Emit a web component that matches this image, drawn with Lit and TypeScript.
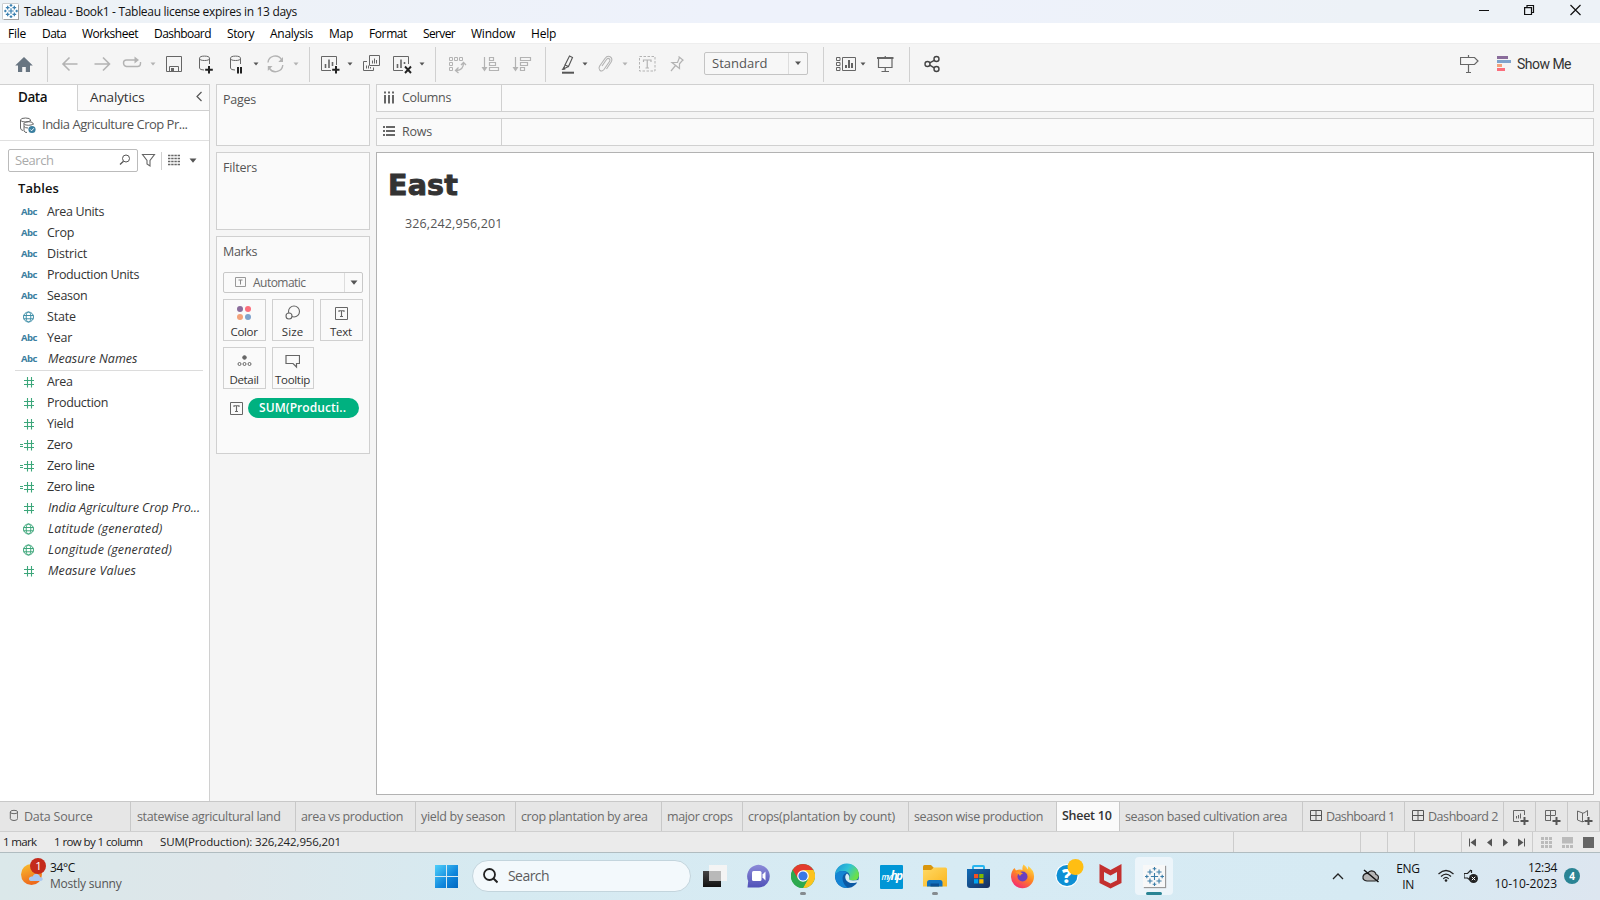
import { LitElement, html, svg, css, nothing } from "lit";
import { customElement, property } from "lit/decorators.js";

/* A label whose tracking is adjusted so that it occupies a given width. */
@customElement("ui-label")
class UiLabel extends LitElement {
  @property() text = "";
  @property({ type: Number }) w = 0;
  static styles = css`
    :host { display: inline-block; white-space: pre; flex: none; }
  `;
  render() {
    return html`<span>${this.text}</span>`;
  }
  updated() {
    const s = this.renderRoot.querySelector("span") as HTMLElement;
    if (!this.w || !s) return;
    s.style.letterSpacing = "0px";
    const n = s.getBoundingClientRect().width;
    s.style.letterSpacing = (this.w - n) / this.text.length + "px";
  }
}

const t = (text: string, w = 0, cls = "") =>
  html`<ui-label class=${cls} .text=${text} .w=${w}></ui-label>`;

const icon = (body: unknown, w = 20, h = 20, cls = "") =>
  html`<svg class=${cls} width=${w} height=${h} viewBox="0 0 ${w} ${h}" fill="none" stroke="currentColor">${body}</svg>`;

const G = {
  home: svg`<path d="M10 3L1.2 11.5H4V18H8.2V13H11.8V18H16V11.5H18.8z" fill="#687581" stroke="none"/>`,
  back: svg`<path d="M17.5 10H3M9.5 3.5L3 10L9.5 16.5" stroke="#b3b3b3" stroke-width="1.6"/>`,
  fwd: svg`<path d="M2.5 10H17M11 3.5L17.500 10L11 16.500" stroke="#b3b3b3" stroke-width="1.6"/>`,
  redo: svg`<path d="M14 6H4.500Q1.500 6 1.500 9T4.500 12.500H15.500Q18.500 12.500 18.500 9.500V8" stroke="#b3b3b3" stroke-width="1.4"/><path d="M12.500 2.500V9.500L17 6z" fill="#b3b3b3" stroke="none"/>`,
  save: svg`<path d="M2.500 2.500H17.500V17.500H2.500zM5.500 17.500V12.500H14.500V17.500" stroke="#666"/><path d="M7 14H10V17.500H7z" fill="#666" stroke="none"/>`,
  dsAdd: svg`<path d="M3.500 4.500V14Q3.500 16 8 16M13.500 4.500V10" stroke="#666"/><ellipse cx="8.500" cy="4.300" rx="5" ry="2.200" stroke="#666"/><path d="M13 12V19.500M9.200 15.800H16.800" stroke="#222" stroke-width="2"/>`,
  dsPause: svg`<path d="M3.500 4.500V14Q3.500 16 8 16M13.500 4.500V10" stroke="#666"/><ellipse cx="8.500" cy="4.300" rx="5" ry="2.200" stroke="#666"/><path d="M11 13V19.500M14 13V19.500" stroke="#222" stroke-width="2"/>`,
  refresh: svg`<path d="M2 8.500A7.300 7.300 0 0 1 15.500 5.500M16.800 11A7.300 7.300 0 0 1 3.500 14.500" stroke="#b3b3b3" stroke-width="1.4"/><path d="M17 3V8H12.300zM1.800 17V12H6.500z" fill="#b3b3b3" stroke="none"/>`,
  sheet: svg`<path d="M16.500 11V2.500H1.500V16.500H11" stroke="#666"/><path d="M5.500 14V10M9 14V5.500M12.500 12V8" stroke="#666" stroke-width="1.600"/><path d="M16 12V19.500M12.200 15.700H19.500" stroke="#222" stroke-width="2"/>`,
  dup: svg`<path d="M8.500 1.500H18.500V11.500H8.500zM6 7.500H2.500V16.500H12.500V13.500" stroke="#666"/><path d="M11.500 9.500V6.500M13.500 9.500V4.500M15.500 9.500V6M5.500 14.500V11.500M7.500 14.500V11.500M9.500 14.500V13" stroke="#666"/>`,
  clear: svg`<path d="M16.500 10V2.500H1.500V16.500H11" stroke="#666"/><path d="M5.500 14V10M9 14V5.500M12.500 10V8" stroke="#666" stroke-width="1.600"/><path d="M13 12.500L19 19M19 12.500L13 19" stroke="#222" stroke-width="1.900"/>`,
  swap: svg`<path d="M2.500 3.500h3v3h-3zM7.500 3.500h3v3h-3zM12.500 3.500h3v3h-3zM2.500 8.500h3v3h-3zM2.500 13.500h3v3h-3z" stroke="#b3b3b3"/><path d="M16.500 9Q16.500 16 9.500 16.500M14 11L16.500 8.500L19 11M11.500 13.500L8.500 16.500L11.500 19" stroke="#b3b3b3" stroke-width="1.300"/>`,
  asc: svg`<path d="M4.500 3V15M9.500 3.500h4v3h-4zM9.500 8.500h6v3h-6zM9.500 13.500h9v3h-9z" stroke="#b3b3b3" stroke-width="1.200"/><path d="M1.500 13H7.500L4.500 17.500z" fill="#b3b3b3" stroke="none"/>`,
  desc: svg`<path d="M3.500 3V15M8.500 3.500h10v3h-10zM8.500 8.500h7v3h-7zM8.500 13.500h4v3h-4z" stroke="#b3b3b3" stroke-width="1.200"/><path d="M.5 13H6.500L3.500 17.500z" fill="#b3b3b3" stroke="none"/>`,
  pen: svg`<path d="M11.500 2L14.500 3.500L10.500 12.500L7 11zM7 11L5.500 15L10.500 12.500" stroke="#555" stroke-width="1.100"/><path d="M3.500 16L6 12.500L7.500 15.500z" fill="#555" stroke="none"/><path d="M4 18.700H16" stroke="#555" stroke-width="2"/>`,
  clip: svg`<path d="M7 12L11.500 5.500Q13 3.500 14.500 5Q15.500 6 14.500 7.500L9 15.500Q7 18 4.800 16.200Q3.200 14.500 4.500 12.300L10 4.500Q12.500 1 15.500 3Q18 5 16 8.300L11.500 15" stroke="#b3b3b3" stroke-width="1.100"/>`,
  tbox: svg`<rect x="2.500" y="2.500" width="15.500" height="14.500" stroke="#b3b3b3" stroke-dasharray="2.500 1.500"/><path d="M6.500 8V6H14V8M10.250 6V14M8.500 14H12" stroke="#b3b3b3" stroke-width="1.200"/>`,
  pin: svg`<path d="M11.500 2.500L16.500 6.500M12.500 3.500L10.500 8.500L5 8.500L12.500 14.500L12.500 9.800L15.800 6M8.500 11.500L4 17" stroke="#b3b3b3" stroke-width="1.200"/>`,
  cards: svg`<path d="M.5 3.500h3.500v3h-3.500zM.5 8.500h3.500v3h-3.500zM.5 13.500h3.500v3h-3.500zM6.500 3.500H19.500V16.500H6.500z" stroke="#666"/><path d="M10 14V11M13 14V6M16 14V9" stroke="#555" stroke-width="1.800"/>`,
  present: svg`<path d="M3.500 4V13.500H17V4M10.250 2V4M10.250 13.500V17M6.500 17.500H14" stroke="#666" stroke-width="1.200"/><path d="M2 4H18.500" stroke="#666" stroke-width="2"/>`,
  share: svg`<g stroke="#444" stroke-width="1.400"><circle cx="5.500" cy="10" r="2.500"/><circle cx="14.500" cy="5" r="2.500"/><circle cx="14.500" cy="15" r="2.500"/><path d="M7.700 8.800L12.300 6.300M7.700 11.200L12.300 13.800"/></g>`,
  sign: svg`<path d="M.5 3.500H14.500L18 7L14.500 10.500H.5zM8.500 1V3.500M8.500 10.500V18M6 18.500H11" stroke="#666" stroke-width="1.200"/>`,
};

type Tool = [keyof typeof G | "|" | "v" | "V" | "select", number];
const TOOLS: Tool[] = [
  ["home", 14], ["|", 13], ["back", 12], ["fwd", 12], ["redo", 10], ["v", 7], ["save", 7], ["dsAdd", 12],
  ["dsPause", 11], ["V", 5], ["refresh", 6], ["v", 6], ["|", 9], ["sheet", 10], ["V", 6], ["dup", 7],
  ["clear", 11], ["V", 6], ["|", 9], ["swap", 11], ["asc", 13], ["desc", 12], ["|", 13], ["pen", 12],
  ["V", 3], ["clip", 6], ["v", 6], ["tbox", 8], ["pin", 10], ["select", 17], ["|", 15], ["cards", 12],
  ["V", 3], ["present", 8], ["|", 14], ["share", 12],
];

const FIELDS: [string, string, number, boolean?][] = [
  ["abc", "Area Units", 57], ["abc", "Crop", 27], ["abc", "District", 40], ["abc", "Production Units", 92],
  ["abc", "Season", 40.5], ["globe", "State", 29], ["abc", "Year", 25], ["abc", "Measure Names", 89.5, true],
];
const MEASURES: [string, string, number, boolean?][] = [
  ["num", "Area", 25.5], ["num", "Production", 61], ["num", "Yield", 26.5], ["calc", "Zero", 25.5],
  ["calc", "Zero line", 47.5], ["calc", "Zero line", 47.5], ["num", "India Agriculture Crop Pro...", 152, true],
  ["globe", "Latitude (generated)", 114.500, true], ["globe", "Longitude (generated)", 124, true],
  ["num", "Measure Values", 88, true],
];

const SHEETS: [string, number, number, string?][] = [
  ["statewise agricultural land", 165, 143.500, "first"], ["area vs production", 120, 102], ["yield by season", 100, 84],
  ["crop plantation by area", 146, 126.500], ["major crops", 81, 65.500], ["crops(plantation by count)", 166, 147],
  ["season wise production", 148, 129], ["Sheet 10", 63, 49.500, "active"], ["season based cultivation area", 183, 162],
  ["Dashboard 1", 102, 68.500, "dash"], ["Dashboard 2", 99, 70, "dash"],
];

const tIcon = (c: string) => icon(svg`<path d="M.5 .5H12.500V12.500H.5z" stroke=${c}/><path d="M4 5V3.700H9V5M6.500 3.700V9.500M5 9.500H8" stroke=${c} stroke-width="1.100"/>`, 13, 13);

const plusMark = (c: string, w: number, s: number) => {
  const pts = [[10.500, 10.500, 4], [10.500, 2, 2], [10.500, 19, 2], [2, 10.500, 2], [19, 10.500, 2], [5.500, 5.500, 2.800], [15.500, 5.500, 2.800], [5.500, 15.500, 2.800], [15.500, 15.500, 2.800]];
  return html`<svg width=${w} height=${w} viewBox="0 0 21 21" stroke=${c} stroke-width=${s}>
    ${pts.map(([x, y, r]) => svg`<path d="M${x - r} ${y}H${x + r}M${x} ${y - r}V${y + r}"/>`)}
  </svg>`;
};

@customElement("app-root")
class AppRoot extends LitElement {
  static styles = css`
    :host { display: block; width: 1600px; height: 900px; overflow: hidden; font: 12.500px/20px "Open Sans", sans-serif; color: #333; background: #f5f5f5; }
    * { box-sizing: border-box; }
    svg { display: block; flex: none; }
    .page { display: flex; flex-direction: column; height: 900px; }
    .title { height: 23px; flex: none; display: flex; align-items: center; background: linear-gradient(90deg, #edf2f6, #eef2fb 45%, #eef2fb 60%, #edf2f7 85%); color: #111; font-size: 12px; padding-left: 3px; }
    .logo { width: 15px; height: 15px; background: #fff; box-shadow: 0 0 0 .5px #aaa, 1px 1px 0 #999; margin: -1px 6px 0 0; display: flex; align-items: center; justify-content: center; }
    .wins { margin-left: auto; display: flex; color: #111; padding-right: 19px; gap: 35px; margin-top: -3px; }
    .menu { height: 20px; flex: none; background: #fff; display: flex; gap: 16px; padding-left: 8px; font-size: 12px; line-height: 22px; color: #000; }
    .tools { height: 41px; flex: none; background: #f5f5f5; border-top: 1px solid #eee; display: flex; align-items: flex-start; }
    .tool { flex: none; margin-top: 10px; }
    .sep { width: 1px; height: 35px; background: #d0d0d0; flex: none; margin-top: 3px; }
    .caret { width: 8px; height: 20px; flex: none; margin-top: 10px; display: flex; align-items: center; justify-content: center; }
    .select { width: 104px; height: 23px; margin-top: 8px; border: 1px solid #c4c4c4; border-radius: 2px; display: flex; background: #f7f7f7; color: #555; line-height: 21px; padding-left: 7px; flex: none; font-size: 13px; }
    .drop { margin-left: auto; width: 19px; border-left: 1px solid #ddd; display: flex; align-items: center; justify-content: center; }
    .auto .drop { width: 18px; }
    .right { margin-left: auto; display: flex; align-items: flex-start; color: #333; font-family: Roboto, sans-serif; font-size: 14px; padding-right: 29px; }
    .right ui-label { margin-top: 9.500px; margin-left: 6px; }
    .right svg { margin-top: 11px; }
    .right svg.sg { margin-top: 10px; }
    .body { height: 717px; flex: none; display: grid; grid-template-columns: 210px 154px 1218px; column-gap: 6px; }
    .side { background: #fff; border-right: 1px solid #d0d0d0; border-top: 1px solid #d0d0d0; }
    .tabs { display: flex; height: 26px; font-size: 13.500px; line-height: 24px; }
    .tab1 { width: 77px; padding-left: 18px; color: #111; font-weight: 600; }
    .tab2 { flex: 1; display: flex; background: #fafafa; border-left: 1px solid #d0d0d0; border-bottom: 1px solid #d0d0d0; padding-left: 12px; color: #333; }
    .tab2 svg { margin: 5px 3px 0 auto; }
    .ds { height: 30px; border-bottom: 1px solid #e0e0e0; display: flex; padding-left: 19px; color: #555; font-size: 13px; line-height: 27px; }
    .ds svg { margin: 6px 5px 0 0; }
    .find { display: flex; margin: 8px 0 0 8px; height: 23px; align-items: center; color: #666; }
    .find > svg { margin-top: -1px; }
    .find .sep { height: 18px; margin: 0; }
    .box { width: 130px; height: 23px; border: 1px solid #bbb; border-radius: 2px; display: flex; align-items: center; padding: 0 6px 1px 6px; justify-content: space-between; color: #aaa; font-size: 13px; }
    .head { font-weight: 600; font-size: 13px; color: #111; height: 29px; line-height: 33px; padding-left: 18px; }
    .field { height: 21px; display: flex; align-items: center; color: #333; font-size: 12.500px; line-height: 21px; }
    .ic { width: 47px; padding-left: 20px; display: flex; flex: none; }
    .ital { font-style: italic; }
    .ital > ui-label { margin-left: 1px; }
    .abc { color: #3c7e9f; font-weight: 700; font-size: 9.500px; line-height: 20px; padding: 1px 0 0 21px; font-style: normal; }
    .teal { color: #3f8fa8; } .green { color: #3ca67a; }
    .rule { height: 1px; background: #dcdcdc; margin: 1px 6px 0 15px; }
    .mid { display: flex; flex-direction: column; gap: 6px; }
    .card { border: 1px solid #d0d0d0; background: #fafafa; padding: 5px 6px; color: #555; font-size: 12.500px; }
    .pages { height: 62px; } .filters { height: 78px; } .marks { height: 218px; }
    .auto { height: 21px; border: 1px solid #c8c8c8; border-radius: 2px; margin-top: 10px; display: flex; padding-left: 11px; line-height: 20px; font-size: 12px; color: #666; }
    .auto svg { margin-top: 3px; margin-right: 6px; }
    .auto .drop svg { margin: 0; }
    .grid { display: grid; grid-template-columns: 43px 42px 43px; grid-auto-rows: 42px; gap: 6px; justify-content: space-between; margin-top: 6px; }
    .btn { border: 1px solid #d0d0d0; display: flex; flex-direction: column; align-items: center; color: #333; font-size: 11.500px; line-height: 16px; padding-right: 1px; }
    .btn .g { height: 25px; display: flex; align-items: center; padding-top: 2px; }
    .pillrow { display: flex; margin: 9px 0 0 7px; gap: 5px; align-items: center; }
    .pill { width: 111px; height: 20px; border-radius: 10px; background: #00b180; color: #fff; font-weight: 600; line-height: 19px; padding-left: 11px; font-size: 12px; }
    .main { display: flex; flex-direction: column; gap: 6px; }
    .shelf { height: 28px; border: 1px solid #d0d0d0; background: #fafafa; display: flex; color: #555; font-size: 12.500px; line-height: 26px; }
    .sl { width: 125px; border-right: 1px solid #d0d0d0; display: flex; padding-left: 6px; }
    .sl svg { margin: 6px 6px 0 0; }
    .view { height: 643px; background: #fff; border: 1px solid #b2b2b2; padding: 15px 11px; }
    .east { font: 700 28.500px/36px "DejaVu Sans", sans-serif; color: #333; display: block; -webkit-text-stroke: .9px #333; }
    .val { display: block; margin: 10px 0 0 17px; color: #555; font-size: 12.500px; }
    .sheets { height: 31px; flex: none; display: flex; background: #e6e6e6; border-top: 1px solid #c8c8c8; border-bottom: 1px solid #cfcfcf; color: #6b6b6b; font-size: 12.500px; line-height: 30px; }
    .sh { border-right: 1px solid #c8c8c8; padding-left: 5px; display: flex; flex: none; }
    .first { padding-left: 6px; }
    .src { width: 131px; padding-left: 9px; }
    .src svg { margin: 7px 6px 0 0; }
    .dash { padding-left: 7px; } .dash svg { margin: 7px 4px 0 0; }
    .active { background: #fafafa; color: #333; font-weight: 600; line-height: 28px; }
    .add { width: 32px; padding-left: 8px; } .add svg { margin-top: 7px; }
    .status { height: 21px; flex: none; display: flex; background: #ebebeb; border-bottom: 1px solid #b0bcc0; color: #222; font-size: 11.500px; line-height: 20px; padding-left: 3px; gap: 17.500px; }
    .cells { margin-left: auto; display: flex; }
    .cell { border-left: 1px solid #ccc; display: flex; align-items: center; flex: none; }
    .nav { width: 71px; padding-left: 4px; } .modes { width: 68px; padding-left: 8px; gap: 9px; }
    .nav svg { margin-top: -1px; }
    .bar { height: 47px; flex: none; display: flex; background: linear-gradient(90deg, #dbe8ea 0, #dde6ea 14%, #d6eaf1 30%, #d7ebf4 60%, #d6eaf3 85%, #dde6f0 100%); color: #111; font-size: 12px; line-height: 16px; }
    .bar > svg { margin-top: 9px; }
    .wx { display: flex; width: 430px; padding-left: 18px; }
    .wx div { padding: 7px 0 0 4px; display: flex; flex-direction: column; }
    .gray { color: #555; }
    .search { width: 219px; height: 32px; margin: 7px 12px 0 13px; border-radius: 16px; background: #f3f9fc; border: 1px solid #c3d5dd; display: flex; align-items: center; padding-left: 10px; gap: 10px; color: #5c5c5c; font-size: 14px; }
    .app { width: 24px; margin: 8px 20px 0 0; flex: none; display: flex; flex-direction: column; align-items: center; }
    .app i { width: 6px; height: 3px; border-radius: 2px; background: #858b8f; margin-top: 3px; }
    .tile { width: 38px; height: 38px; margin: 4px 0 0 -7px; background: #edf5fa; border-radius: 4px; display: flex; flex-direction: column; align-items: center; padding-top: 8px; flex: none; }
    .tile div { width: 22px; height: 22px; background: #f8f8f8; box-shadow: 1px 1px 1px #999; display: flex; align-items: center; justify-content: center; }
    .tile i { width: 16px; height: 3px; border-radius: 2px; background: #2a8494; margin-top: 5px; }
    .bar > svg.help { margin-top: 5px; }
    .hp { width: 23px; height: 24px; margin-top: 4px; background: #0096d6; color: #fff; font: italic 700 9px/22px "Open Sans", sans-serif; border-radius: 1px; display: flex; align-items: baseline; padding-left: 2px; }
    .hp .my { font-size: 8px; font-weight: 600; } .hp .big { font-size: 12px; }
    .tray { margin-left: auto; display: flex; color: #111; }
    .lang { display: flex; flex-direction: column; align-items: center; padding-top: 8px; width: 26px; margin-right: 17px; }
    .clock { display: flex; flex-direction: column; align-items: flex-end; padding-top: 7px; width: 64px; margin-left: 11px; }
    .badge { width: 16px; height: 16px; border-radius: 50%; background: #2a8494; color: #fff; font-weight: 700; font-size: 10px; text-align: center; margin: 15px 20px 0 7px; }
  `;

  caret(c: string, w = 5) {
    return html`<svg width="8" height="5" viewBox="0 0 8 5"><path d="M${4 - w / 2} 0.500H${4 + w / 2}L4 ${0.500 + w * 0.600}z" fill=${c} /></svg>`;
  }

  tool([k, gap]: Tool) {
    const m = `margin-left:${gap}px`;
    if (k === "|") return html`<div class="sep" style=${m}></div>`;
    if (k === "v" || k === "V") return html`<div class="caret" style=${m}>${this.caret(k === "V" ? "#555" : "#b3b3b3")}</div>`;
    if (k === "select") return html`<div class="select" style=${m}>${t("Standard", 55.500)}<div class="drop">${this.caret("#555", 6)}</div></div>`;
    return html`<div class="tool" style=${m}>${icon(G[k])}</div>`;
  }

  fieldIcon(k: string, green: boolean) {
    if (k === "abc") return html`<div class="ic abc">${t("Abc", 16)}</div>`;
    if (k === "globe")
      return html`<div class="ic ${green ? "green" : "teal"}">${icon(svg`<circle cx="8.500" cy="7" r="5"/><ellipse cx="8.500" cy="7" rx="2.300" ry="5"/><path d="M3.500 5.500H13.500M3.500 8.800H13.500"/>`, 16, 14)}</div>`;
    return html`<div class="ic green">${icon(svg`<path d="M4 5.500H14M4 9.500H14M7.500 2V12.500M11.500 2V12.500" stroke-width="1.100"/>${k === "calc" ? svg`<path d="M0 6.500H3M0 8.500H3"/>` : nothing}`, 16, 14)}</div>`;
  }

  field(f: [string, string, number, boolean?], green: boolean) {
    return html`<div class="field ${f[3] ? "ital" : ""}">${this.fieldIcon(f[0], green)}${t(f[1], f[2])}</div>`;
  }

  side() {
    return html`<div class="side">
      <div class="tabs">
        <div class="tab1">${t("Data", 29)}</div>
        <div class="tab2">${t("Analytics", 54.500)}${icon(svg`<path d="M7.500 2L3 6.500L7.500 11" stroke="#555" stroke-width="1.200"/>`, 12, 13)}</div>
      </div>
      <div class="ds">
        ${icon(svg`<g stroke="#666"><ellipse cx="6.500" cy="3" rx="5" ry="2"/><path d="M1.500 3V11Q1.500 13 4 13.500M11.500 3V4"/><ellipse cx="9.500" cy="6.500" rx="4.500" ry="1.800"/><path d="M5 6.500V14Q5.500 15.500 8 15.500M14 6.500V8M5 9.500Q6 11 9 11"/></g><circle cx="13" cy="12.500" r="3.600" fill="#3a7fa0" stroke="none"/><path d="M11.300 12.500L12.600 13.800L14.800 11.300" stroke="#fff"/>`, 18, 18)}
        ${t("India Agriculture Crop Pr...", 145.500)}
      </div>
      <div class="find">
        <div class="box">${t("Search", 38.500)}${icon(svg`<circle cx="7" cy="4.500" r="3.500" stroke="#555"/><path d="M4.500 7.300L1 10.500" stroke="#555" stroke-width="1.300"/>`, 12, 12)}</div>
        ${icon(svg`<path d="M4.500 2.500H16.500L12 8.500V14L9 12V8.500z" stroke="#666" stroke-width="1.100"/>`, 23, 16)}
        <div class="sep"></div>
        ${icon(svg`<path d="M6 2.500H18M6 5.500H18M6 8.500H18M6 11.500H18" stroke="#666" stroke-width="1.300" stroke-dasharray="2.400 .8"/>`, 27, 14)}
        ${this.caret("#555", 7)}
      </div>
      <div class="head">${t("Tables", 41)}</div>
      ${FIELDS.map((f) => this.field(f, false))}
      <div class="rule"></div>
      ${MEASURES.map((f) => this.field(f, true))}
    </div>`;
  }

  btn(g: unknown, label: string, w: number) {
    return html`<div class="btn"><div class="g">${g}</div>${t(label, w)}</div>`;
  }

  cards() {
    return html`<div class="mid">
      <div class="card pages">${t("Pages", 33)}</div>
      <div class="card filters">${t("Filters", 34)}</div>
      <div class="card marks">
        ${t("Marks", 34)}
        <div class="auto">${icon(svg`<path d="M.5 1.500H10.500V10.500H.5z" stroke="#999"/><path d="M3.500 4H7.500M5.500 4V8.500" stroke="#888"/>`, 12, 13)}${t("Automatic", 52.500)}<div class="drop">${this.caret("#555", 7)}</div></div>
        <div class="grid">
          ${this.btn(icon(svg`<g stroke="none"><circle cx="3" cy="4" r="3" fill="#8a6c9b"/><circle cx="11" cy="4" r="3" fill="#fb6e7c"/><circle cx="3" cy="12" r="3" fill="#f3a27a"/><circle cx="11" cy="12" r="3" fill="#7fa3cc"/></g>`, 15, 16), "Color", 27)}
          ${this.btn(icon(svg`<circle cx="9" cy="6.500" r="5.500" stroke="#666" stroke-width="1.100"/><circle cx="4" cy="11" r="3" fill="#fafafa" stroke="#666" stroke-width="1.100"/>`, 16, 16), "Size", 21.500)}
          ${this.btn(tIcon("#666"), "Text", 22)}
          ${this.btn(icon(svg`<g stroke="#666"><circle cx="7.500" cy="3.500" r="1.800" fill="#666"/><circle cx="2.500" cy="10" r="1.500"/><circle cx="7.500" cy="10" r="1.500"/><circle cx="12.500" cy="10" r="1.500"/></g>`, 15, 14), "Detail", 29)}
          ${this.btn(icon(svg`<path d="M1 1.500H14.500V9.500H11.500V13L8 9.500H1z" stroke="#666" stroke-width="1.200"/>`, 15, 15), "Tooltip", 35)}
        </div>
        <div class="pillrow">${tIcon("#666")}<div class="pill">${t("SUM(Producti..", 87)}</div></div>
      </div>
    </div>`;
  }

  main() {
    return html`<div class="main">
      <div class="shelf"><div class="sl">${icon(svg`<path d="M2 .5V2.500M6 .5V2.500M10 .5V2.500M2 4V12.500M6 4V12.500M10 4V12.500" stroke="#666" stroke-width="2"/>`, 13, 13)}${t("Columns", 49)}</div></div>
      <div class="shelf"><div class="sl">${icon(svg`<path d="M0 2H2M0 6H2M0 10H2M3 2H12M3 6H12M3 10H12" stroke="#666" stroke-width="2"/>`, 13, 13)}${t("Rows", 30)}</div></div>
      <div class="view">${t("East", 70, "east")}${t("326,242,956,201", 97.500, "val")}</div>
    </div>`;
  }

  dashIcon() {
    return icon(svg`<path d="M.5 1.500H11.500V11.500H.5zM6 1.500V11.500M.5 6.500H11.500" stroke="#555"/>`, 12, 13);
  }

  sheets() {
    const plus = svg`<path d="M12.500 8V16M8.500 12H16.500" stroke="#555" stroke-width="2"/>`;
    return html`<div class="sheets">
      <div class="sh src">${icon(svg`<ellipse cx="5" cy="3" rx="3.700" ry="1.700" stroke="#666"/><path d="M1.300 3V9.500Q1.500 11.500 5 11.500T8.700 9.500V3" stroke="#666"/>`, 9, 13)}${t("Data Source", 68.500)}</div>
      ${SHEETS.map(([n, w, tw, k]) => html`<div class="sh ${k ?? ""}" style="width:${w}px">${k === "dash" ? this.dashIcon() : nothing}${t(n, tw)}</div>`)}
      <div class="sh add">${icon(svg`<path d="M12.500 6V1.500H1.500V12.500H7" stroke="#666"/><path d="M4.500 9.500V7M6.500 9.500V6M8.500 9.500V4.500" stroke="#666"/>${plus}`, 18, 17)}</div>
      <div class="sh add">${icon(svg`<path d="M11.500 6V1.500H1.500V11.500H7M6.500 1.500V11.500M1.500 6.500H11.500" stroke="#666"/>${plus}`, 18, 17)}</div>
      <div class="sh add">${icon(svg`<path d="M6.500 13V4L1.500 2V11L6.500 13M6.500 4H8L11.500 1.500V7M6.500 12.500H8" stroke="#666"/>${plus}`, 18, 17)}</div>
    </div>`;
  }

  status() {
    const nav = ["M10 6.500V14.500L4.500 10.500z", "M10 6.500V14.500L5 10.500z", "M5 6.500V14.500L10 10.500z", "M4 6.500V14.500L9.500 10.500z"];
    return html`<div class="status">
      ${t("1 mark", 33.500)}${t("1 row by 1 column", 88.500)}${t("SUM(Production): 326,242,956,201", 181)}
      <div class="cells">
        <div class="cell" style="width:127px"></div><div class="cell" style="width:27px"></div><div class="cell" style="width:27px"></div><div class="cell" style="width:47px"></div>
        <div class="cell nav">${nav.map((d, i) => icon(svg`<path d=${d} fill="#555" stroke="none"/>${i === 0 ? svg`<path d="M3.500 6.500V14.500" stroke="#555"/>` : i === 3 ? svg`<path d="M10.500 6.500V14.500" stroke="#555"/>` : nothing}`, 16, 20))}</div>
        <div class="cell modes">
          ${icon(svg`<path d="M0 1.500H11M0 5.500H11M0 9.500H11" stroke="#bbb" stroke-width="3" stroke-dasharray="3 1"/>`, 12, 11)}
          ${icon(svg`<path d="M0 0H11V6.500H0z" fill="#bbb" stroke="none"/><path d="M0 9.500H11" stroke="#bbb" stroke-width="3" stroke-dasharray="3 1"/>`, 12, 11)}
          ${icon(svg`<path d="M0 0H11V11H0z" fill="#666" stroke="none"/>`, 12, 11)}
        </div>
      </div>
    </div>`;
  }

  app(body: unknown, dot = false) {
    return html`<div class="app"><svg width="24" height="28" viewBox="0 0 24 28">${body}</svg>${dot ? html`<i></i>` : nothing}</div>`;
  }

  taskbar() {
    return html`<div class="bar">
      <div class="wx">
        <svg width="28" height="36" viewBox="0 0 28 36">
          <defs><linearGradient id="sun" x2="0.300" y2="1"><stop stop-color="#f9c02e"/><stop offset="1" stop-color="#ee6a1c"/></linearGradient></defs>
          <circle cx="13.500" cy="21.500" r="10.500" fill="url(#sun)"/>
          <path d="M13 28Q10.500 27.500 11 25Q12 23 14.500 23.500Q16 20 19.500 21Q22 22 22 24Q25.500 24.500 24.500 27Q24 28 22 28z" fill="#a9c8f2"/>
          <circle cx="20" cy="13" r="8" fill="#c42b1c"/>
          <text x="17.300" y="17.200" font-family="Open Sans" font-size="11.500" fill="#fff">1</text>
        </svg>
        <div>${t("34°C", 25)}${t("Mostly sunny", 71.500, "gray")}</div>
      </div>
      <svg width="29" height="30" viewBox="0 0 29 30">
        <defs><linearGradient id="win" x2="1" y2="1"><stop stop-color="#4fd0fb"/><stop offset=".6" stop-color="#0f86dc"/><stop offset="1" stop-color="#0067c0"/></linearGradient></defs>
        <path d="M5 3H16V14H5zM17 3H28V14H17zM5 15H16V26H5zM17 15H28V26H17z" fill="url(#win)"/>
      </svg>
      <div class="search">${icon(svg`<circle cx="6.500" cy="6.500" r="5.500" stroke="#222" stroke-width="1.800"/><path d="M10.500 10.500L14.500 14.500" stroke="#222" stroke-width="2"/>`, 15, 16)}${t("Search", 41)}</div>
      ${this.app(svg`<defs><linearGradient id="tv" y2="1" x2="0"><stop stop-color="#444"/><stop offset="1" stop-color="#111"/></linearGradient></defs><path d="M0 10H18V26H0z" fill="url(#tv)"/><path d="M6 4H24V20H6z" fill="#f4f4f4"/><path d="M6 10H18V20H6z" fill="#b9b9b9"/>`)}
      ${this.app(svg`<defs><linearGradient id="ch" x2="0" y2="1"><stop stop-color="#8b8ad8"/><stop offset="1" stop-color="#5051b8"/></linearGradient></defs><path d="M.5 26.500L1.200 20A11.300 11.300 0 1 1 12 26.500z" fill="url(#ch)"/><rect x="5" y="10" width="9.500" height="10" rx="1.500" fill="#fff"/><path d="M15.500 13.500L18.500 10.500V19.500L15.500 16.500z" fill="#fff"/>`)}
      ${this.app(svg`<circle cx="12" cy="15" r="12" fill="#2da94f"/><path d="M12 15L1.600 9A12 12 0 0 1 22.400 9z" fill="#e33b2e"/><path d="M12 27A12 12 0 0 0 22.400 9H12L17 18z" fill="#fcc31e"/><path d="M1.600 9L7 18L12 15V9z" fill="#e33b2e"/><path d="M1.600 9L7 18L12 21L17 18L12 27A12 12 0 0 1 1.600 9" fill="#2da94f"/><circle cx="12" cy="15" r="5.800" fill="#fff"/><circle cx="12" cy="15" r="4.600" fill="#3b78e7"/>`, true)}
      ${this.app(svg`<defs><linearGradient id="ed" x1="0" x2="1" y2=".5"><stop stop-color="#1a8fd8"/><stop offset=".55" stop-color="#2fc3d6"/><stop offset="1" stop-color="#6be04a"/></linearGradient></defs><circle cx="12" cy="15" r="12" fill="#0c59a4"/><path d="M0 15A12 12 0 0 1 24 14Q24 19.500 18 19.500Q13.500 19.500 14 17Q15.500 14.500 13.500 12Q11 9.500 7 10Q2 10.800 0 15z" fill="url(#ed)"/><path d="M0 15Q2 10 7 10Q11 10 12 12Q8 12.500 7.500 17Q7.500 23 13 27Q1 27 0 15z" fill="#1484d4"/><path d="M12 12.500Q9 15 11 19Q14 23.500 21.500 21.500Q23 21 22 22.500L23.500 23V19L18 19.500Q13.500 19.500 14 17Q15 14.500 12 12.500z" fill="#d7ebf4"/>`)}
      <div class="app"><div class="hp">${t("my", 9, "my")}${t("hp", 11, "big")}</div></div>
      ${this.app(svg`<defs><linearGradient id="fo" x2="1" y2="1"><stop stop-color="#ffd964"/><stop offset="1" stop-color="#fbb51e"/></linearGradient></defs><path d="M0 5.500Q0 4 1.500 4H8L10.500 6.500V11H0z" fill="#d9960c"/><path d="M0 9H8L11 6.500H22.500Q24 6.500 24 8V25.500H0z" fill="url(#fo)"/><path d="M4 25.500V21.500Q4 19 6.500 19H17Q19.500 19 19.500 21.500V25.500z" fill="#1272be"/><path d="M7.500 22.500H16V25.500H7.500z" fill="#0a4f93"/>`, true)}
      ${this.app(svg`<defs><linearGradient id="st" x2="1" y2="1"><stop stop-color="#0f6cb8"/><stop offset="1" stop-color="#1b2d5a"/></linearGradient></defs><path d="M6 9V6Q6 5 7 5H16Q17 5 17 6V9" fill="none" stroke="#27b5f0" stroke-width="2"/><path d="M0 8H23V24Q23 27 20 27H3Q0 27 0 24z" fill="url(#st)"/><path d="M7 13H11.200V17.200H7z" fill="#f25022"/><path d="M12.200 13H16.500V17.200H12.200z" fill="#7fba00"/><path d="M7 18.200H11.200V22.500H7z" fill="#00a4ef"/><path d="M12.200 18.200H16.500V22.500H12.200z" fill="#ffb900"/>`)}
      ${this.app(svg`<defs><linearGradient id="ff" x1=".8" y1="0" x2=".2" y2="1"><stop stop-color="#ffe14a"/><stop offset=".45" stop-color="#ff8a20"/><stop offset="1" stop-color="#f4207a"/></linearGradient></defs><path d="M12.500 3.500Q15.500 5.500 16.500 8.500Q17.500 6.500 17 5Q23.500 9.500 23 16A11.500 11.500 0 0 1 0 15.500Q0 10.500 3.500 7L5 9.500Q8.500 8 11.500 9Q11 6 12.500 3.500z" fill="url(#ff)"/><circle cx="11.500" cy="15.500" r="5" fill="#6a3fc0"/><path d="M4 11Q8 9.500 12 12.500Q9.500 13 9 15Q7.500 12.500 4 11z" fill="#ff9a28"/>`)}
      <svg class="help" width="43" height="30" viewBox="0 0 43 30">
        <circle cx="12" cy="17.500" r="11.500" fill="#fff"/><circle cx="12" cy="17.500" r="10.500" fill="#0e8fd4"/>
        <text x="7" y="24.500" font-family="Open Sans" font-weight="800" font-size="19" fill="#fff">?</text>
        <circle cx="20.500" cy="9" r="8" fill="#ffbe12"/>
      </svg>
      ${this.app(svg`<path d="M1.500 3L12.500 9L23.500 3V22L12.500 27.500L1.500 22z" fill="#c3302f"/><path d="M6 11L12.500 14.500L19 11V19.200L12.500 22.500L6 19.200z" fill="#d7ebf4"/>`)}
      <div class="tile"><div>${plusMark("#3a7da8", 19, 1.200)}</div><i></i></div>
      <div class="tray">
        ${icon(svg`<path d="M5 26L10 21L15 26" stroke="#222" stroke-width="1.300"/>`, 34, 46)}
        ${icon(svg`<path d="M5 28Q.5 27.500 1 23.500Q2 20 5.500 20.500Q8 16.500 12 18.500Q14 20 14 21.500Q17.500 22.500 16 26.500Q15 28 13 28z" fill="#b5b5b5" stroke="#222" stroke-width="1.200"/><path d="M2 17L16.500 29" stroke="#111" stroke-width="1.500"/>`, 33, 46)}
        <div class="lang">${t("ENG", 23.500)}${t("IN", 11.500)}</div>
        ${icon(svg`<g stroke="#222" stroke-width="1.200"><path d="M.5 21Q8 14 15.500 21M3 23.500Q8 18.500 13 23.500M5.300 25.800Q8 23 10.700 25.800"/></g><circle cx="8" cy="27.500" r="1.300" fill="#222" stroke="none"/>`, 26, 46)}
        ${icon(svg`<path d="M7 17L3.500 20.500H0V25H3.500L6 27M7.500 17V20" stroke="#222" stroke-width="1.200"/><circle cx="9.500" cy="25.500" r="4.500" fill="#222" stroke="none"/><path d="M7.800 23.800L11.200 27.200M11.200 23.800L7.800 27.200" stroke="#fff"/>`, 18, 46)}
        <div class="clock">${t("12:34", 29)}${t("10-10-2023", 62.500)}</div>
        <div class="badge">4</div>
      </div>
    </div>`;
  }

  render() {
    const menu: [string, number][] = [["File", 18], ["Data", 24], ["Worksheet", 56], ["Dashboard", 57], ["Story", 27], ["Analysis", 43], ["Map", 24], ["Format", 38], ["Server", 32], ["Window", 44], ["Help", 25]];
    return html`<div class="page">
      <div class="title">
        <div class="logo">${plusMark("#3a80b0", 14, 1.800)}</div>
        ${t("Tableau - Book1 - Tableau license expires in 13 days", 273)}
        <div class="wins">
          ${icon(svg`<path d="M0 6.500H10"/>`, 10, 12)}
          ${icon(svg`<path d="M.6 3.600H7.500V10.500H.6zM3 3V1.500H9.500V8.500H8" stroke-width="1.200"/>`, 11, 12)}
          ${icon(svg`<path d="M.5 1L10.500 11M10.500 1L.5 11" stroke-width="1.200"/>`, 11, 12)}
        </div>
      </div>
      <div class="menu">${menu.map(([m, w]) => t(m, w))}</div>
      <div class="tools">
        ${TOOLS.map((x) => this.tool(x))}
        <div class="right">
          ${icon(G.sign, 37, 20, "sg")}
          ${icon(svg`<g stroke="none"><path d="M0 1H11V4H0z" fill="#8a6c9b"/><path d="M0 5H14V8H0z" fill="#7fa3cc"/><path d="M0 9H5V12H0z" fill="#f3a27a"/><path d="M0 13H8V16H0z" fill="#fb6e7c"/></g>`, 14, 17)}
          ${t("Show Me", 54)}
        </div>
      </div>
      <div class="body">${this.side()}${this.cards()}${this.main()}</div>
      ${this.sheets()}${this.status()}${this.taskbar()}
    </div>`;
  }
}
